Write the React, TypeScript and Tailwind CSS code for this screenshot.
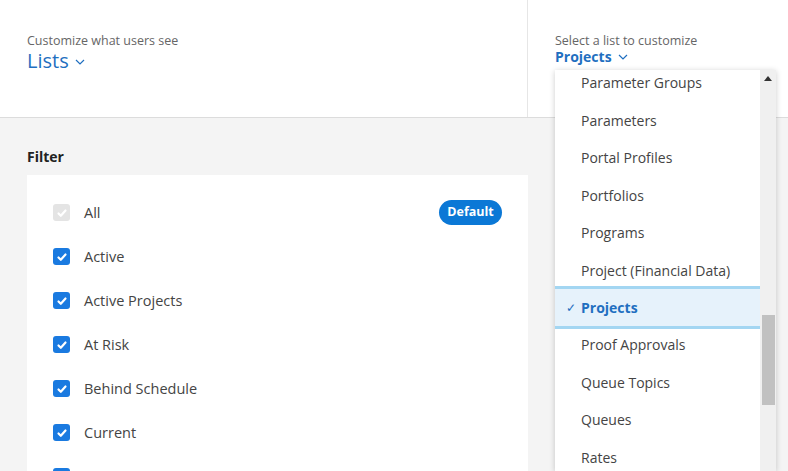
import React from "react";

const filters = ["Active", "Active Projects", "At Risk", "Behind Schedule", "Current", "Future"];
const items = [
  "Parameter Groups",
  "Parameters",
  "Portal Profiles",
  "Portfolios",
  "Programs",
  "Project (Financial Data)",
  "Projects",
  "Proof Approvals",
  "Queue Topics",
  "Queues",
  "Rates",
];

function Chevron({ className }: { className?: string }) {
  return (
    <svg viewBox="0 0 10 6" className={className} fill="none" stroke="currentColor" strokeWidth="1.2">
      <path d="M1 1l4 4 4-4" />
    </svg>
  );
}

function Check() {
  return (
    <span className="w-[17px] h-[17px] rounded-[3px] bg-[#1a7ae0] flex items-center justify-center shrink-0">
      <svg viewBox="0 0 12 12" className="w-[12px] h-[12px]" fill="none" stroke="white" strokeWidth="2.2" strokeLinecap="round" strokeLinejoin="round">
        <path d="M2.5 6.5l2.3 2.3L9.5 3.5" />
      </svg>
    </span>
  );
}

export default function App() {
  return (
    <div className="w-[788px] h-[471px] overflow-hidden relative bg-[#f4f4f4] text-[#333]" style={{ fontFamily: "'Open Sans', 'Liberation Sans', sans-serif" }}>
      <div className="h-[118px] bg-white border-b border-[#dcdcdc] flex">
        <div className="w-[528px] border-r border-[#e6e6e6] pl-[27px] pt-[33px]">
          <div className="text-[12.5px] text-[#666] leading-[16px]">Customize what users see</div>
          <div className="flex items-center gap-[6px] text-[#1f6fc0] text-[20px] font-medium leading-[24px]">
            Lists <Chevron className="w-[10px] h-[6px] mt-[2px]" />
          </div>
        </div>
        <div className="flex-1 pl-[27px] pt-[33px]">
          <div className="text-[12.5px] text-[#666] leading-[15px]">Select a list to customize</div>
          <div className="flex items-center gap-[6px] text-[#1f6fc0] text-[14px] font-bold leading-[17px]">
            Projects <Chevron className="w-[10px] h-[6px] mt-[1px]" />
          </div>
        </div>
      </div>

      <div className="pl-[27px] pt-[30px]">
        <div className="text-[14px] font-bold text-[#222] leading-[18px]">Filter</div>
        <div className="mt-[9px] w-[501px] bg-white pl-[26px] pr-[26px] pt-[25px] h-[400px]">
          <div className="flex items-center h-[25px]">
            <span className="w-[17px] h-[17px] rounded-[3px] bg-[#e4e4e4] flex items-center justify-center">
              <svg viewBox="0 0 12 12" className="w-[12px] h-[12px]" fill="none" stroke="white" strokeWidth="2.2" strokeLinecap="round" strokeLinejoin="round">
                <path d="M2.5 6.5l2.3 2.3L9.5 3.5" />
              </svg>
            </span>
            <span className="ml-[14px] text-[14.5px] text-[#444] flex-1">All</span>
            <span className="bg-[#0b78d6] text-white text-[12.5px] font-bold rounded-full h-[25px] w-[63px] flex items-center justify-center">Default</span>
          </div>
          {filters.map((f) => (
            <div key={f} className="flex items-center h-[25px] mt-[19px]">
              <Check />
              <span className="ml-[14px] text-[14.5px] text-[#444]">{f}</span>
            </div>
          ))}
        </div>
      </div>

      <div className="absolute left-[555px] top-[70px] w-[221px] bottom-0 bg-white shadow-[0_1px_6px_rgba(0,0,0,0.2)] flex overflow-hidden">
        <div className="flex-1 -mt-[6px]">
          {items.map((it) =>
            it === "Projects" ? (
              <div key={it} className="h-[43px] -mt-[3px] mb-[-3px] bg-[#e6f2fb] border-y-[3px] border-[#a3d6f2] flex items-center pl-[11px] text-[#1f6fc0] font-bold text-[14px]">
                <span className="text-[12px] mr-[5px] font-normal">✓</span>Projects
              </div>
            ) : (
              <div key={it} className="h-[37.5px] flex items-center pl-[26px] text-[14px] text-[#444]">
                {it}
              </div>
            )
          )}
        </div>
        <div className="w-[16px] bg-[#f0f0f0] relative">
          <div className="absolute top-[6px] w-0 h-0 border-l-[4px] border-r-[4px] border-b-[5px] border-l-transparent border-r-transparent border-b-[#333]" style={{ left: 4 }} />
          <div className="absolute left-[2px] right-[1px] top-[245px] h-[90px] bg-[#c1c1c1]" />
        </div>
      </div>
    </div>
  );
}
